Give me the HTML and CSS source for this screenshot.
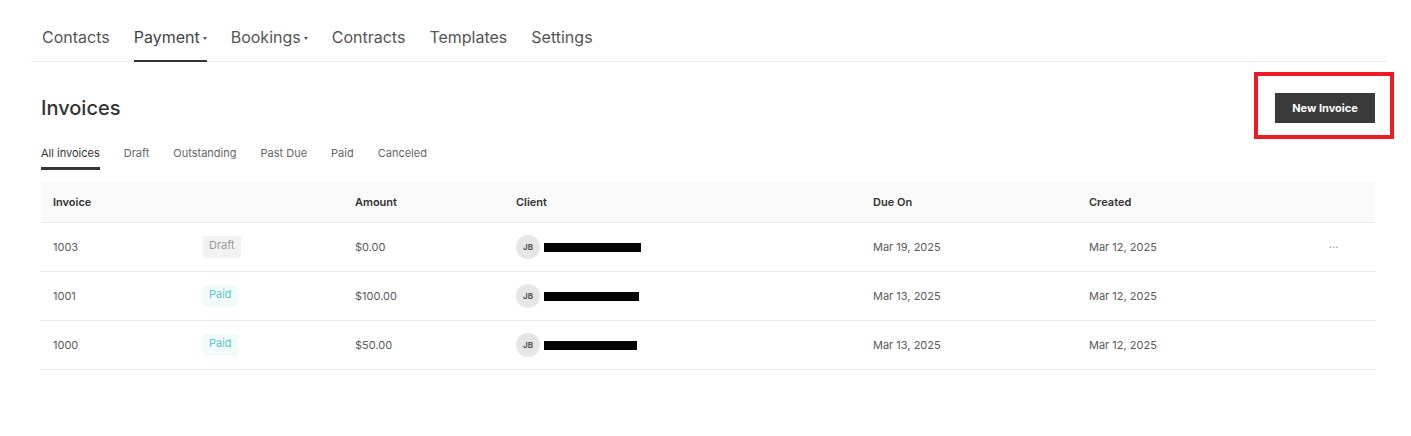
FILE: index.html
```html
<!DOCTYPE html>
<html lang="en">
<head>
    <meta charset="UTF-8">
    <meta name="viewport" content="width=device-width, initial-scale=1.0">
    <title>Invoices</title>
    <link rel="stylesheet" href="styles.css">
</head>
<body>
    <nav class="main-nav">
        <a href="#" class="nav-item">Contacts</a>
        <a href="#" class="nav-item active">Payment<span class="caret"></span></a>
        <a href="#" class="nav-item">Bookings<span class="caret"></span></a>
        <a href="#" class="nav-item">Contracts</a>
        <a href="#" class="nav-item">Templates</a>
        <a href="#" class="nav-item">Settings</a>
    </nav>

    <div class="content">
        <div class="page-header">
            <h1>Invoices</h1>
            <div class="button-wrap">
                <button class="new-invoice">New Invoice</button>
                <div class="highlight"></div>
            </div>
        </div>

        <div class="tabs">
            <a href="#" class="tab active">All invoices</a>
            <a href="#" class="tab">Draft</a>
            <a href="#" class="tab">Outstanding</a>
            <a href="#" class="tab">Past Due</a>
            <a href="#" class="tab">Paid</a>
            <a href="#" class="tab">Canceled</a>
        </div>

        <table class="invoices">
            <colgroup>
                <col style="width: 150px">
                <col style="width: 152px">
                <col style="width: 161px">
                <col style="width: 357px">
                <col style="width: 216px">
                <col style="width: 240px">
                <col style="width: 58px">
            </colgroup>
            <thead>
                <tr>
                    <th>Invoice</th>
                    <th></th>
                    <th>Amount</th>
                    <th>Client</th>
                    <th>Due On</th>
                    <th>Created</th>
                    <th></th>
                </tr>
            </thead>
            <tbody>
                <tr>
                    <td>1003</td>
                    <td><span class="badge draft">Draft</span></td>
                    <td>$0.00</td>
                    <td><div class="client"><span class="avatar">JB</span><span class="redacted" style="width: 97px"></span></div></td>
                    <td>Mar 19, 2025</td>
                    <td>Mar 12, 2025</td>
                    <td class="more">&middot;&middot;&middot;</td>
                </tr>
                <tr>
                    <td>1001</td>
                    <td><span class="badge paid">Paid</span></td>
                    <td>$100.00</td>
                    <td><div class="client"><span class="avatar">JB</span><span class="redacted" style="width: 95px"></span></div></td>
                    <td>Mar 13, 2025</td>
                    <td>Mar 12, 2025</td>
                    <td></td>
                </tr>
                <tr>
                    <td>1000</td>
                    <td><span class="badge paid">Paid</span></td>
                    <td>$50.00</td>
                    <td><div class="client"><span class="avatar">JB</span><span class="redacted" style="width: 93px"></span></div></td>
                    <td>Mar 13, 2025</td>
                    <td>Mar 12, 2025</td>
                    <td></td>
                </tr>
            </tbody>
        </table>
    </div>
</body>
</html>
```

FILE: styles.css
```css
body {
    font-family: Inter, "Open Sans", Arial, sans-serif;
    margin: 0;
    background-color: white;
    color: #555;
}

a {
    text-decoration: none;
}

.main-nav {
    display: flex;
    gap: 24px;
    margin: 12px 24px 0 31px;
    padding-left: 11px;
    border-bottom: 1px solid #ececec;
}

.nav-item {
    display: flex;
    align-items: center;
    height: 50px;
    box-sizing: border-box;
    padding-top: 2px;
    border-bottom: 2px solid transparent;
    margin-bottom: -1px;
    font-size: 16px;
    color: #555;
}

.nav-item.active {
    color: #444;
    border-bottom-color: #333;
}

.caret {
    display: inline-block;
    margin-left: 3px;
    margin-top: 2px;
    border-left: 2.5px solid transparent;
    border-right: 2.5px solid transparent;
    border-top: 3px solid #555;
}

.content {
    margin-left: 41px;
    width: 1334px;
}

.page-header {
    display: flex;
    justify-content: space-between;
    align-items: center;
    margin-top: 31px;
    height: 30px;
}

h1 {
    margin: 0;
    font-size: 20px;
    font-weight: 500;
    color: #333;
}

.button-wrap {
    position: relative;
}

.new-invoice {
    display: block;
    width: 100px;
    height: 30px;
    border: none;
    background-color: #3a3a3a;
    color: white;
    font-family: inherit;
    font-size: 11px;
    font-weight: 700;
    cursor: pointer;
}

.highlight {
    position: absolute;
    top: -21px;
    left: -21px;
    right: -19px;
    bottom: -16px;
    border: 4px solid #ec1c24;
}

.tabs {
    display: flex;
    gap: 24px;
    margin-top: 22px;
}

.tab {
    font-size: 11px;
    line-height: 16px;
    padding-bottom: 6px;
    border-bottom: 3px solid transparent;
    color: #666;
}

.tab.active {
    color: #333;
    border-bottom-color: #333;
}

.invoices {
    width: 100%;
    margin-top: 12px;
    border-collapse: collapse;
    table-layout: fixed;
    font-size: 11px;
}

th, td {
    padding: 0 12px;
    text-align: left;
}

th {
    height: 40px;
    background-color: #fafafa;
    font-weight: 600;
    color: #333;
    border-bottom: 1px solid #ececec;
}

td {
    height: 48px;
    border-bottom: 1px solid #ececec;
    color: #5a5a5a;
}

.badge {
    display: inline-block;
    padding: 2px 6px 6px;
    border-radius: 3px;
    font-size: 11px;
}

.badge.draft {
    background-color: #f2f2f2;
    color: #9a9a9a;
}

.badge.paid {
    background-color: #f2fbfb;
    color: #5cc6cb;
}

.client {
    display: flex;
    align-items: center;
    gap: 4px;
}

.avatar {
    display: flex;
    align-items: center;
    justify-content: center;
    width: 24px;
    height: 24px;
    border-radius: 50%;
    background-color: #e6e6e6;
    color: #555;
    font-size: 8px;
    font-weight: 700;
}

.redacted {
    display: inline-block;
    height: 9px;
    background-color: black;
}

.more {
    color: #999;
    font-size: 11px;
}
```
